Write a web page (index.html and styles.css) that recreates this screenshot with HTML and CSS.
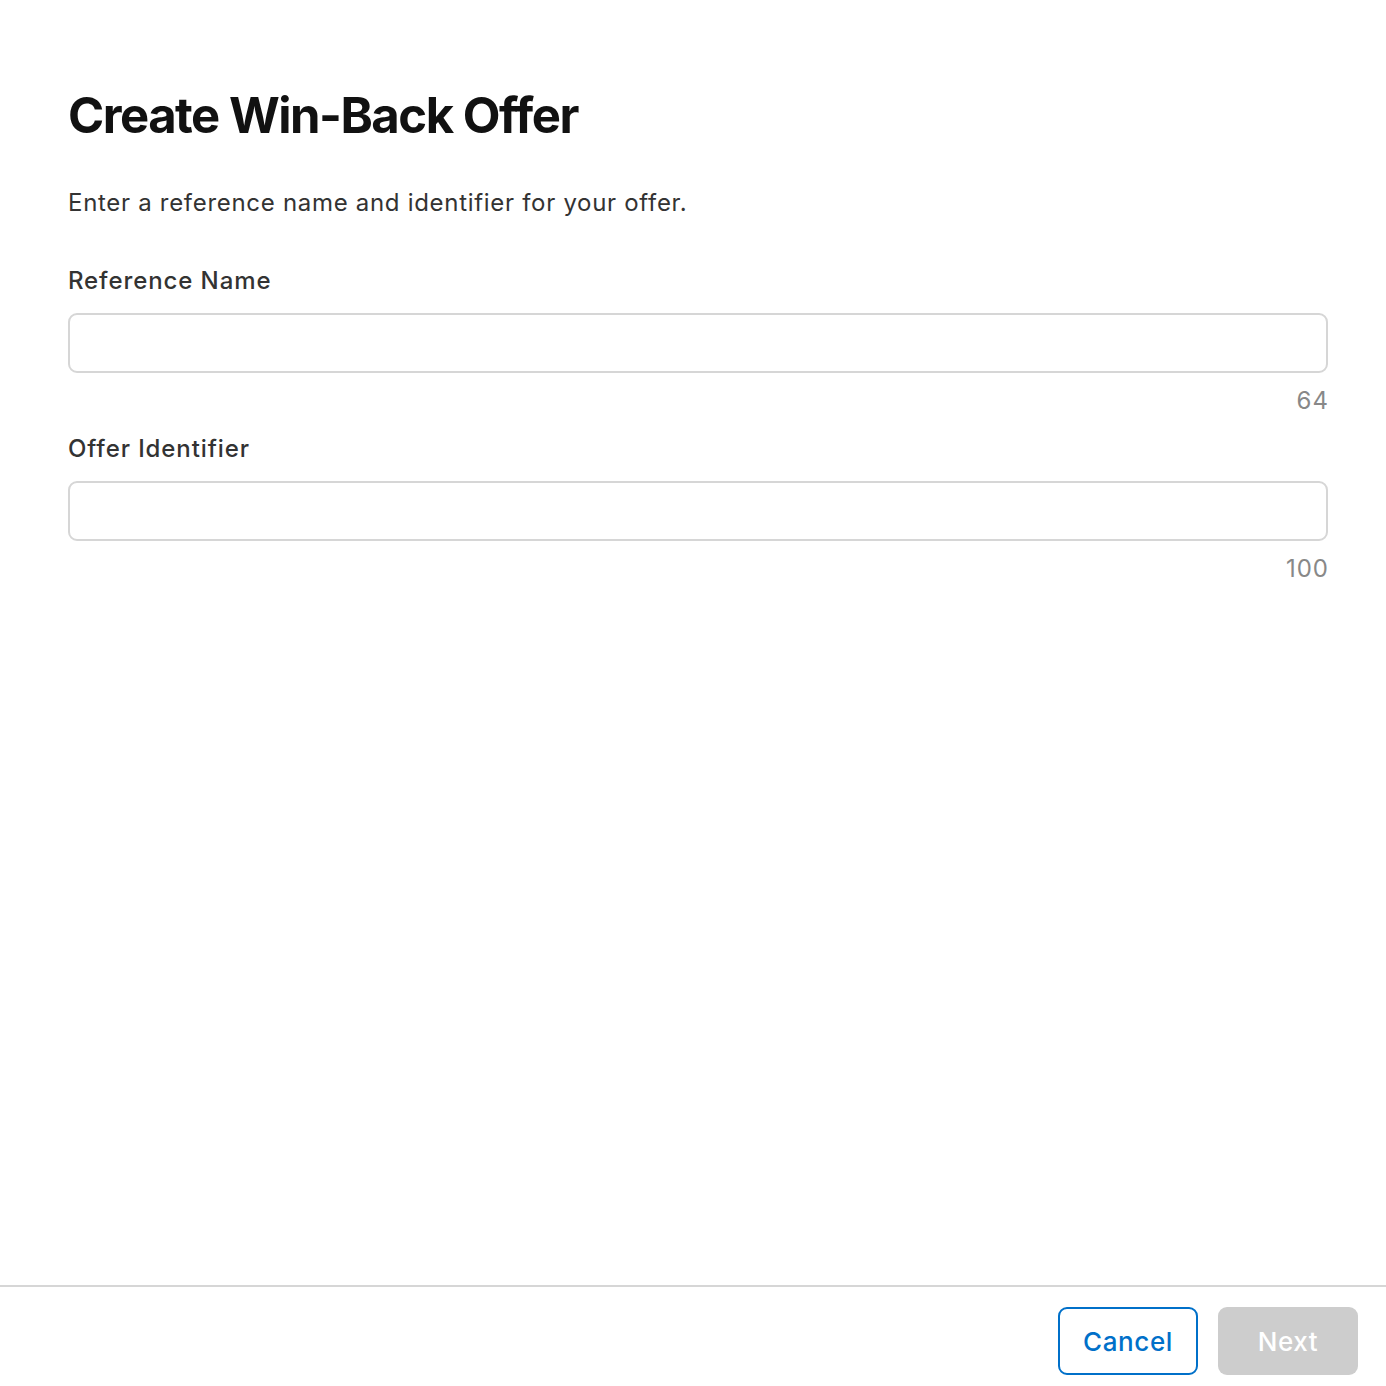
FILE: index.html
```html
<!DOCTYPE html>
<html lang="en">
<head>
<meta charset="utf-8">
<title>Create Win-Back Offer</title>
<link rel="stylesheet" href="styles.css">
</head>
<body>
<div class="dialog">
  <main class="content">
    <h1 class="title">Create Win-Back Offer</h1>
    <p class="intro">Enter a reference name and identifier for your offer.</p>
    <div class="field">
      <label class="label" for="ref">Reference Name</label>
      <input class="input" id="ref" type="text">
      <div class="counter">64</div>
    </div>
    <div class="field">
      <label class="label" for="oid">Offer Identifier</label>
      <input class="input" id="oid" type="text">
      <div class="counter">100</div>
    </div>
  </main>
  <footer class="footer">
    <button class="btn btn-cancel" type="button">Cancel</button>
    <button class="btn btn-next" type="button" disabled>Next</button>
  </footer>
</div>
</body>
</html>
```

FILE: styles.css
```css
html, body {
  margin: 0;
  padding: 0;
  background: #fff;
}
body {
  font-family: Inter, "Noto Sans", sans-serif;
  color: #333;
}
.dialog {
  height: 100vh;
  display: flex;
  flex-direction: column;
}
.content {
  flex: 1;
  padding: 0 58px 0 68px;
}
.title {
  margin: 86px 0 0;
  font-size: 49px;
  line-height: 60px;
  font-weight: 700;
  color: #111;
  letter-spacing: -1.5px;
}
.intro {
  margin: 41px 0 0;
  font-size: 24px;
  line-height: 32px;
  letter-spacing: 0.7px;
}
.field {
  display: flex;
  flex-direction: column;
}
.label {
  margin-top: 46px;
  font-size: 24px;
  line-height: 32px;
  font-weight: 500;
  letter-spacing: 0.9px;
}
.field + .field .label {
  margin-top: 16px;
}
.input {
  margin-top: 16px;
  height: 60px;
  box-sizing: border-box;
  border: 2px solid #d6d6d6;
  border-radius: 9px;
  font: inherit;
  padding: 0 16px;
  outline: none;
}
.counter {
  margin-top: 12px;
  margin-right: -1px;
  text-align: right;
  font-size: 24px;
  line-height: 32px;
  letter-spacing: 1px;
  color: #888;
}
.footer {
  border-top: 2px solid #d6d6d6;
  padding: 20px 28px 11px;
  display: flex;
  justify-content: flex-end;
  gap: 20px;
}
.btn {
  width: 140px;
  height: 68px;
  box-sizing: border-box;
  border-radius: 9px;
  font-family: Inter, "Noto Sans", sans-serif;
  font-size: 26px;
  font-weight: 500;
  letter-spacing: 0.6px;
  cursor: pointer;
}
.btn-cancel {
  background: #fff;
  border: 2px solid #0070c9;
  color: #0070c9;
}
.btn-next {
  background: #cdcdcd;
  border: 0;
  color: #fff;
}
```
